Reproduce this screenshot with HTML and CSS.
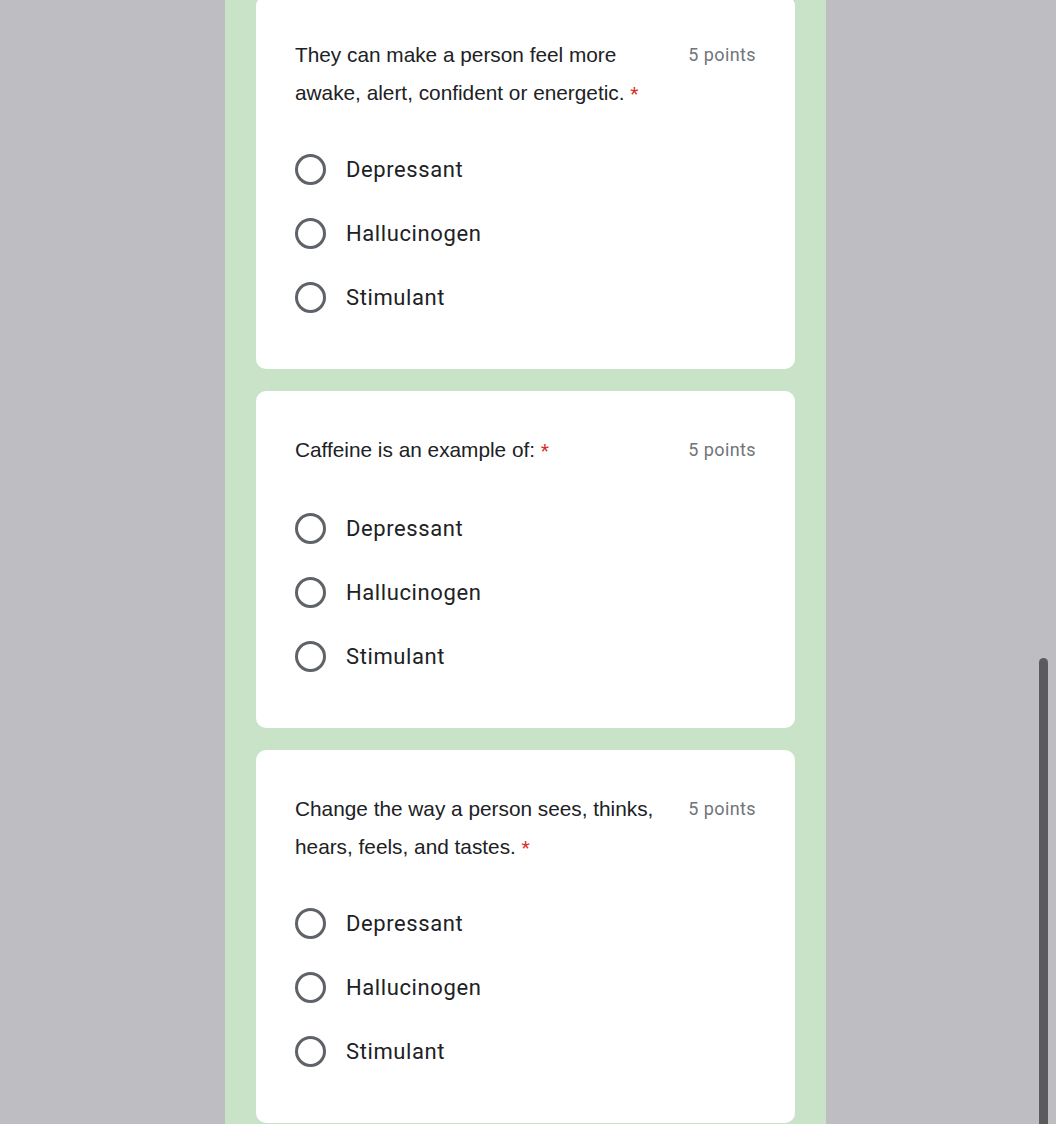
FILE: index.html
```html
<!DOCTYPE html>
<html>
<head>
<meta charset="utf-8">
<link rel="stylesheet" href="styles.css">
</head>
<body>
<div class="column">
  <div class="card first">
    <div class="head">
      <div class="question">They can make a person feel more awake, alert, confident or energetic. <span class="req">*</span></div>
      <div class="points">5 points</div>
    </div>
    <div class="options">
      <label class="option"><span class="radio"></span><span class="label">Depressant</span></label>
      <label class="option"><span class="radio"></span><span class="label">Hallucinogen</span></label>
      <label class="option"><span class="radio"></span><span class="label">Stimulant</span></label>
    </div>
  </div>
  <div class="card">
    <div class="head">
      <div class="question">Caffeine is an example of: <span class="req">*</span></div>
      <div class="points">5 points</div>
    </div>
    <div class="options">
      <label class="option"><span class="radio"></span><span class="label">Depressant</span></label>
      <label class="option"><span class="radio"></span><span class="label">Hallucinogen</span></label>
      <label class="option"><span class="radio"></span><span class="label">Stimulant</span></label>
    </div>
  </div>
  <div class="card">
    <div class="head">
      <div class="question">Change the way a person sees, thinks, hears, feels, and tastes. <span class="req">*</span></div>
      <div class="points">5 points</div>
    </div>
    <div class="options">
      <label class="option"><span class="radio"></span><span class="label">Depressant</span></label>
      <label class="option"><span class="radio"></span><span class="label">Hallucinogen</span></label>
      <label class="option"><span class="radio"></span><span class="label">Stimulant</span></label>
    </div>
  </div>
</div>
<div class="scrollbar"></div>
</body>
</html>
```
FILE: styles.css
```css
html, body {
  margin: 0;
  padding: 0;
  height: 100%;
  overflow: hidden;
}
body {
  background: #bebdc2;
  font-family: Roboto, "Liberation Sans", sans-serif;
  position: relative;
}
.column {
  width: 601px;
  margin-left: 225px;
  min-height: 1124px;
  background: #c8e3c8;
  padding: 0 31px;
  box-sizing: border-box;
  display: flex;
  flex-direction: column;
  gap: 22px;
}
.card {
  background: #ffffff;
  border-radius: 10px;
  padding: 40px 39px 40px 39px;
  display: flex;
  flex-direction: column;
}
.card.first {
  margin-top: -4px;
}
.head {
  display: flex;
  align-items: flex-start;
  justify-content: space-between;
  gap: 24px;
  min-height: 40px;
}
.question {
  font-family: "Liberation Sans", Arial, sans-serif;
  font-size: 20.8px;
  line-height: 38px;
  color: #202124;
  max-width: 366px;
}
.req {
  color: #d93025;
  font-family: Roboto, sans-serif;
  font-size: 19px;
  line-height: 1;
}
.points {
  font-family: Roboto, sans-serif;
  font-size: 18px;
  letter-spacing: 0.4px;
  line-height: 38px;
  color: #70757a;
  white-space: nowrap;
}
.options {
  margin-top: 25px;
  display: flex;
  flex-direction: column;
}
.option {
  height: 64px;
  display: flex;
  align-items: center;
  gap: 20px;
}
.radio {
  width: 31px;
  height: 31px;
  box-sizing: border-box;
  border: 3px solid #5f6368;
  border-radius: 50%;
  flex: none;
}
.label {
  font-family: Roboto, sans-serif;
  font-size: 22px;
  letter-spacing: 0.6px;
  color: #202124;
}
.scrollbar {
  position: absolute;
  left: 1039px;
  top: 658px;
  width: 9px;
  height: 480px;
  background: #5b5b5d;
  border-radius: 5px 5px 0 0;
}
```
